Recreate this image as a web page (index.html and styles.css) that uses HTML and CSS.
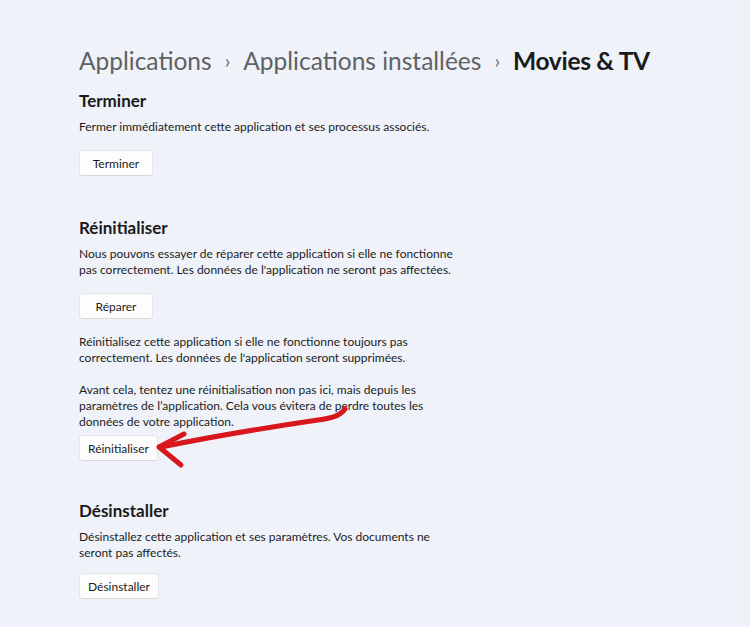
FILE: index.html
```html
<!DOCTYPE html>
<html lang="fr">
<head>
	<meta charset="UTF-8">
	<title>Movies &amp; TV</title>
	<link rel="stylesheet" href="styles.css">
</head>
<body>
	<div class="page">
		<h1 class="crumbs">
			<span class="crumb">Applications</span>
			<span class="sep">&#8250;</span>
			<span class="crumb">Applications installées</span>
			<span class="sep">&#8250;</span>
			<span class="crumb current">Movies &amp; TV</span>
		</h1>

		<section class="block first">
			<h2>Terminer</h2>
			<p>Fermer immédiatement cette application et ses processus associés.</p>
			<button class="btn">Terminer</button>
		</section>

		<section class="block">
			<h2>Réinitialiser</h2>
			<p>Nous pouvons essayer de réparer cette application si elle ne fonctionne<br>pas correctement. Les données de l'application ne seront pas affectées.</p>
			<button class="btn">Réparer</button>
			<p class="after-btn">Réinitialisez cette application si elle ne fonctionne toujours pas<br>correctement. Les données de l'application seront supprimées.</p>
			<p class="gap">Avant cela, tentez une réinitialisation non pas ici, mais depuis les<br>paramètres de l’application. Cela vous évitera de perdre toutes les<br>données de votre application.</p>
			<button class="btn tight">Réinitialiser</button>
		</section>

		<section class="block last">
			<h2>Désinstaller</h2>
			<p>Désinstallez cette application et ses paramètres. Vos documents ne<br>seront pas affectés.</p>
			<button class="btn near">Désinstaller</button>
		</section>

		<!-- trait rouge dessiné à la main par-dessus la capture -->
		<svg class="arrow" width="750" height="627" viewBox="0 0 750 627">
			<path d="M345 409 C 340 416 332 418 318 420 C 270 427 210 437 161 447" />
			<path d="M184 434 L 159 447 L 181 465" />
		</svg>
	</div>
</body>
</html>
```

FILE: styles.css
```css
*{margin:0;padding:0;box-sizing:border-box}
html,body{
	background:#eff2f8;
}
body{
	font-family:Lato,"Noto Sans",sans-serif;
	color:#1c1c1c;
}
.page{
	width: 750px;
	height: 627px;
	padding:40px 0 0 79px;
	position:relative;
	overflow:hidden;
}
.crumbs{
	font-size:24.5px;
	font-weight:400;
	color:#5f6165;
	display:flex;
	align-items:center;
	gap:13px;
	height:40px;
	white-space:nowrap;
}
.crumbs .sep{
	font-size:20px;
	color:#6b6d70;
}
.crumbs .current{
	color:#1a1a1a;
	font-weight:700;
	letter-spacing:-0.3px;
}
.block{
	margin-top:40px;
}
.block.first{
	margin-top:9px;
}
.block.last{
	margin-top:38px;
}
h2{
	font-size:17px;
	font-weight:700;
	line-height:24px;
	color:#1a1a1a;
}
p{
	font-size:12px;
	line-height:16px;
	margin-top:6px;
	white-space:nowrap;
}
p.after-btn{
	margin-top:15px;
}
p.gap{
	margin-top:16px;
}
.btn{
	display:block;
	margin-top:15px;
	height:26px;
	min-width:74px;
	padding:0 8px;
	font-family:inherit;
	font-size:12px;
	color:#1c1c1c;
	background:#fdfdfe;
	border:1px solid #e3e5ea;
	border-bottom-color:#d6d8dc;
	border-radius:4px;
}
.btn.tight{
	margin-top:5px;
}
.btn.near{
	margin-top:12px;
}
.arrow{
	position:absolute;
	left:0;
	top:0;
	pointer-events:none;
}
.arrow path{
	fill:none;
	stroke:#d8171d;
	stroke-width:5;
	stroke-linecap:round;
	stroke-linejoin:round;
}
```
